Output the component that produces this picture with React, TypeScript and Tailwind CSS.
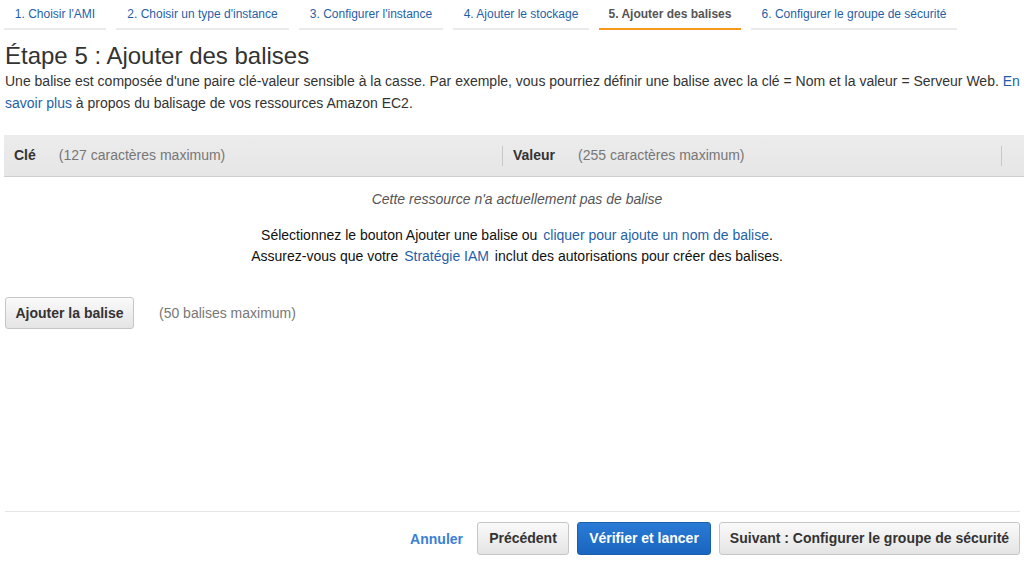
const tabs = [
  { label: "1. Choisir l'AMI", w: "w-[102px]" },
  { label: "2. Choisir un type d'instance", w: "w-[173px]" },
  { label: "3. Configurer l'instance", w: "w-[144px]" },
  { label: "4. Ajouter le stockage", w: "w-[136px]" },
  { label: "5. Ajouter des balises", w: "w-[142px]", active: true },
  { label: "6. Configurer le groupe de sécurité", w: "w-[206px]" },
];

export default function App() {
  return (
    <div className="w-[1029px] h-[567px] bg-white flex flex-col font-['Liberation_Sans',Arial,sans-serif] text-[#333] overflow-hidden">
      {/* Wizard tabs */}
      <div className="flex gap-[10px] pl-[4px] h-[30px]">
        {tabs.map((t) => (
          <div
            key={t.label}
            className={`${t.w} flex items-center justify-center text-[12px] border-b-2 ${
              t.active ? "border-[#f7981d] text-[#555] font-bold" : "border-[#eaeaea] text-[#1f5fa8]"
            }`}
          >
            {t.label}
          </div>
        ))}
      </div>

      {/* Heading */}
      <div className="px-[5px] pr-[6px]">
        <h1 className="text-[24px] leading-[28px] mt-[12px] text-[#333]">Étape 5 : Ajouter des balises</h1>
        <p className="text-[14px] leading-[22px] text-[#333]">
          Une balise est composée d'une paire clé-valeur sensible à la casse. Par exemple, vous pourriez définir une balise avec la clé = Nom et la valeur = Serveur Web.{" "}
          <a className="text-[#1f5fa8]">En savoir plus</a> à propos du balisage de vos ressources Amazon EC2.
        </p>
      </div>

      {/* Table header */}
      <div className="mt-[21px] ml-[4px] mr-[5px] h-[42px] flex items-center bg-gradient-to-b from-[#ececec] to-[#e6e6e6] border-b border-[#cfcfcf] text-[14px]">
        <div className="w-[499px] flex items-center pl-[10px] h-[20px] border-r border-[#c8c8c8]">
          <span className="font-bold text-[#333]">Clé</span>
          <span className="ml-[23px] text-[#777]">(127 caractères maximum)</span>
        </div>
        <div className="w-[499px] flex items-center pl-[10px] h-[20px] border-r border-[#c8c8c8]">
          <span className="font-bold text-[#333]">Valeur</span>
          <span className="ml-[23px] text-[#777]">(255 caractères maximum)</span>
        </div>
      </div>

      <div className="text-center text-[14px] italic text-[#555] mt-[13px] leading-[18px] pl-[5px]">
        Cette ressource n'a actuellement pas de balise
      </div>

      <div className="text-center text-[14px] text-[#111] mt-[17px] leading-[21px] pl-[5px]">
        <div>
          Sélectionnez le bouton Ajouter une balise ou <a className="ml-[2px] text-[#1f5fa8]">cliquer pour ajoute un nom de balise</a>.
        </div>
        <div>
          Assurez-vous que votre <a className="ml-[2px] mr-[2px] text-[#1f5fa8]">Stratégie IAM</a> inclut des autorisations pour créer des balises.
        </div>
      </div>

      <div className="flex items-center mt-[30px] pl-[5px] text-[14px]">
        <button className="h-[32px] w-[129px] rounded-[3px] border border-[#c6c6c6] bg-gradient-to-b from-[#fafafa] to-[#e4e4e4] font-bold text-[#333]">
          Ajouter la balise
        </button>
        <span className="ml-[25px] text-[#777]">(50 balises maximum)</span>
      </div>

      <div className="flex-1" />

      {/* Footer */}
      <div className="ml-[5px] mr-[9px] border-t border-[#e5e5e5] h-[56px] flex items-start justify-end gap-[8px] pt-[10px] text-[14px] font-bold">
        <a className="self-center mr-[6px] text-[#3a7fd5] -mt-[11px]">Annuler</a>
        <button className="h-[33px] w-[92px] rounded-[3px] border border-[#c6c6c6] bg-gradient-to-b from-[#fafafa] to-[#e4e4e4] text-[#333]">
          Précédent
        </button>
        <button className="h-[33px] w-[134px] rounded-[3px] border border-[#1a5fae] bg-gradient-to-b from-[#2a7bd6] to-[#1965bf] text-white">
          Vérifier et lancer
        </button>
        <button className="h-[33px] w-[301px] rounded-[3px] border border-[#c6c6c6] bg-gradient-to-b from-[#fafafa] to-[#e4e4e4] text-[#333]">
          Suivant : Configurer le groupe de sécurité
        </button>
      </div>
    </div>
  );
}
